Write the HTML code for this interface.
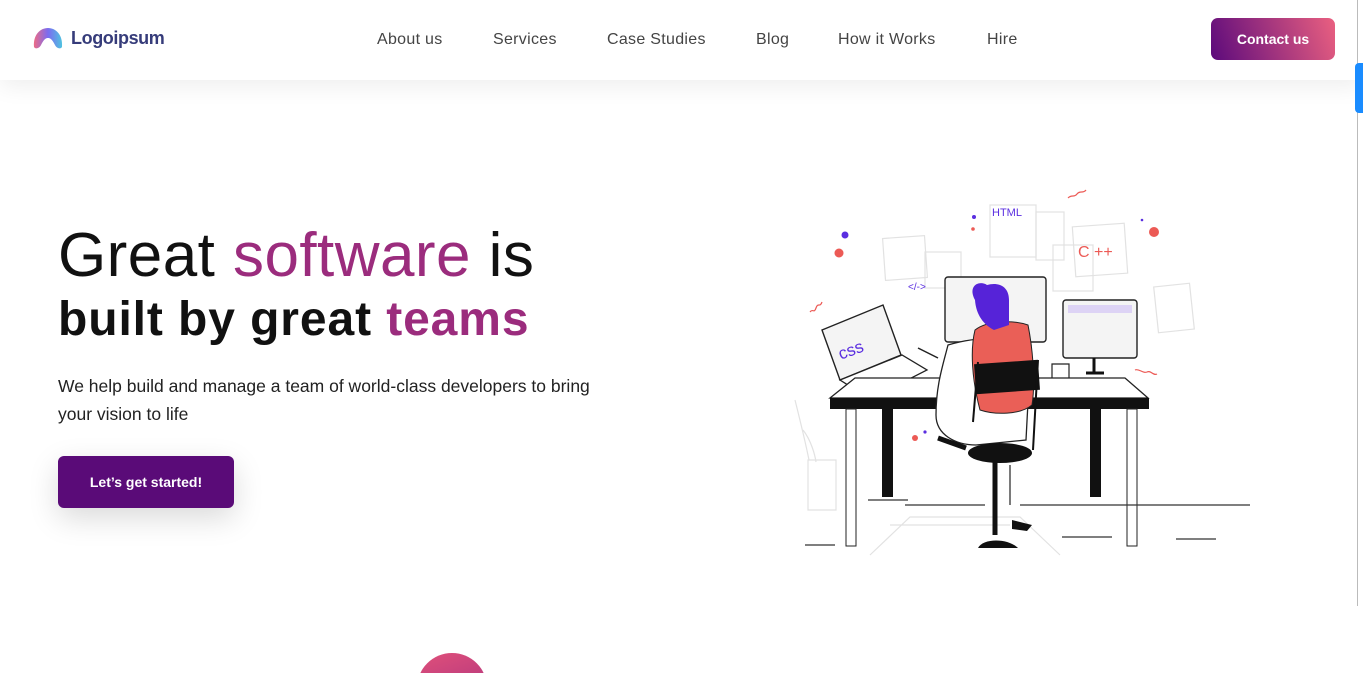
<!DOCTYPE html>
<html><head><meta charset="utf-8">
<style>
*{margin:0;padding:0;box-sizing:border-box}
html,body{width:1363px;height:673px;overflow:hidden}
body{background:#fff;font-family:"Liberation Sans",sans-serif;position:relative}
.hdr{position:absolute;left:0;top:0;width:1363px;height:80px;background:#fff;box-shadow:0 6px 22px rgba(0,0,0,.07)}
.logo{position:absolute;left:33px;top:27px;display:flex;align-items:center}
.logo span{font-weight:bold;font-size:18px;color:#363c7a;margin-left:8px;letter-spacing:-.4px}
.nav a{position:absolute;top:31px;font-size:16px;color:#444;text-decoration:none;letter-spacing:.3px}
.cta{position:absolute;left:1211px;top:18px;width:124px;height:42px;border-radius:7px;background:linear-gradient(70deg,#5c0a7c,#ea6080);color:#fff;font-weight:bold;font-size:14px;text-align:center;line-height:42px}
h1{position:absolute;left:58px;font-weight:normal;white-space:nowrap}
.l1{top:220px;font-size:62px;color:#111;letter-spacing:.45px}
.l2{top:292px;font-size:48px;font-weight:bold;color:#111;letter-spacing:.9px}
.p{position:absolute;left:58px;top:372px;font-size:17.5px;line-height:28px;color:#222;width:545px}
.btn{position:absolute;left:58px;top:456px;width:176px;height:52px;border-radius:6px;background:#5a0b78;color:#fff;font-weight:bold;font-size:14px;text-align:center;line-height:52px;box-shadow:0 10px 30px rgba(0,0,0,.15)}
.sb{position:absolute;left:1357px;top:0;width:1px;height:606px;background:#bbb}
.sbt{position:absolute;left:1355px;top:63px;width:8px;height:50px;background:#1a8cff;border-radius:4px 0 0 4px}
.cw{position:absolute;left:417px;top:653px;width:70px;height:20px;overflow:hidden}
.circ{width:70px;height:70px;border-radius:50%;background:linear-gradient(160deg,#e0507a,#a02c80)}
</style></head><body>
<div class="hdr">
<div class="logo"><svg width="30" height="22" viewBox="0 0 30 22"><defs><linearGradient id="lg" x1="0" x2="1"><stop offset="0" stop-color="#ec6b86"/><stop offset=".5" stop-color="#7b6cf0"/><stop offset="1" stop-color="#4fc3e0"/></linearGradient></defs><path d="M1 20C0 8 7 1 15 1S30 8 29 20C28 22 24 22 22 18 19 12 17 11 15 11S11 12 8 18C6 22 2 22 1 20Z" fill="url(#lg)"/></svg><span>Logoipsum</span></div>
<div class="nav"><a style="left:377px">About us</a><a style="left:493px">Services</a><a style="left:607px">Case Studies</a><a style="left:756px">Blog</a><a style="left:838px">How it Works</a><a style="left:987px">Hire</a></div>
<div class="cta">Contact us</div>
</div>
<div class="sb"></div><div class="sbt"></div>
<h1 class="l1">Great <span style="color:#9b2c7d">software</span> is</h1>
<h1 class="l2">built by great <span style="color:#9b2c7d">teams</span></h1>
<div class="p">We help build and manage a team of world-class developers to bring your vision to life</div>
<div class="btn">Let’s get started!</div>
<div class="cw"><div class="circ"></div></div>
<svg style="position:absolute;left:0;top:0" width="1363" height="673" viewBox="0 0 1363 673" font-family="Liberation Sans, sans-serif">
<g fill="none" stroke="#e2e2e2" stroke-width="1.2">
<rect x="884" y="237" width="42" height="42" transform="rotate(-4 905 258)"/>
<rect x="925" y="252" width="36" height="36"/>
<rect x="990" y="205" width="46" height="52"/>
<rect x="1036" y="212" width="28" height="48"/>
<rect x="1053" y="245" width="40" height="46"/>
<rect x="1074" y="225" width="52" height="50" transform="rotate(-4 1100 250)"/>
<rect x="1156" y="285" width="36" height="46" transform="rotate(-6 1174 308)"/>
<path d="M795 400c5 20 10 40 14 60M803 430c8 10 12 25 13 32M808 460h28v50h-28z"/>
<path d="M870 555l40-38h110l40 38M890 525h120"/>
</g>
<g fill="#5a2ee0"><circle cx="845" cy="235" r="3.5"/><circle cx="974" cy="217" r="2"/><circle cx="1142" cy="220" r="1.3"/><circle cx="925" cy="432" r="1.6"/></g>
<g fill="#ec5a55"><circle cx="839" cy="253" r="4.5"/><circle cx="973" cy="229" r="1.8"/><circle cx="1154" cy="232" r="5"/><circle cx="915" cy="438" r="3"/></g>
<g font-size="11" fill="#5a2ee0"><text x="992" y="216">HTML</text><text x="908" y="290" font-size="10">&lt;/-&gt;</text></g>
<text x="1078" y="257" font-size="16" fill="#ec5a55">C ++</text>
<path d="M1068 198c4-4 6 0 9-4s6 0 9-4M810 312c3-4 4 2 6-4s4 0 6-6M1135 370c4-2 8 4 12 2s6 4 10 2" stroke="#ec5a55" fill="none" stroke-width="1.2"/>
<rect x="945" y="277" width="101" height="65" rx="3" fill="#f4f4f4" stroke="#222" stroke-width="1.4"/>
<rect x="1063" y="300" width="74" height="58" rx="3" fill="#f4f4f4" stroke="#222" stroke-width="1.4"/>
<rect x="1068" y="305" width="64" height="8" fill="#ddd3f5"/>
<path d="M1094 358v14M1086 373h18" stroke="#111" stroke-width="3"/>
<path d="M1052 364h17v22h-17z" fill="#fff" stroke="#222" stroke-width="1.2"/>
<path d="M822 330l61-25 18 50-61 25z" fill="#f4f4f4" stroke="#222" stroke-width="1.4"/>
<text x="838" y="356" font-size="17" fill="#5a2ee0" transform="rotate(-20 850 350)">css</text>
<path d="M840 380l62-25 25 15-57 29z" fill="#fff" stroke="#222" stroke-width="1.3"/>
<path d="M830 398l25-20h270l23 20z" fill="#fff" stroke="#222" stroke-width="1.3"/>
<rect x="830" y="398" width="319" height="11" fill="#111"/>
<rect x="846" y="409" width="10" height="137" fill="#fff" stroke="#222"/>
<rect x="1127" y="409" width="10" height="137" fill="#fff" stroke="#222"/>
<rect x="882" y="409" width="11" height="88" fill="#111"/>
<rect x="1090" y="409" width="11" height="88" fill="#111"/>
<path d="M868 500h40M905 505h80M1020 505h100M1120 505h130M805 545h30M1062 537h50M1176 539h40" stroke="#333" stroke-width="1.2"/>
<path d="M948 345c-5 20 -12 40 -12 70 0 20 20 30 40 30l50-5 5-95c-10-8-50-10-83 0z" fill="#fff" stroke="#222" stroke-width="1.3"/>
<path d="M975 330c-5 20-3 50 5 80 15 5 40 5 52-5 4-25 0-60-4-80-15-5-40-5-53 5z" fill="#ea5f57" stroke="#222"/>
<path d="M975 300c-8-15 5-20 12-15 10-3 22 0 22 15v25l-15 5c-10-5-18-15-19-30z" fill="#5623d8"/>
<path d="M938 358l-20-10" stroke="#222" stroke-width="1.5"/>
<rect x="975" y="362" width="64" height="30" fill="#111" transform="rotate(-4 1007 377)"/>
<path d="M978 362l-5 60M1038 360l-5 90" stroke="#111" stroke-width="2"/>
<ellipse cx="1000" cy="453" rx="32" ry="10" fill="#111"/>
<path d="M938 438l28 10M995 460v75" stroke="#111" stroke-width="5"/>
<path d="M1010 465v40" stroke="#222" fill="none" stroke-width="1.2"/>
<path d="M978 548c5-10 30-10 40 0z" fill="#111"/>
<path d="M1012 520l20 5-5 6-15-2z" fill="#111"/>
</svg>
</body></html>
